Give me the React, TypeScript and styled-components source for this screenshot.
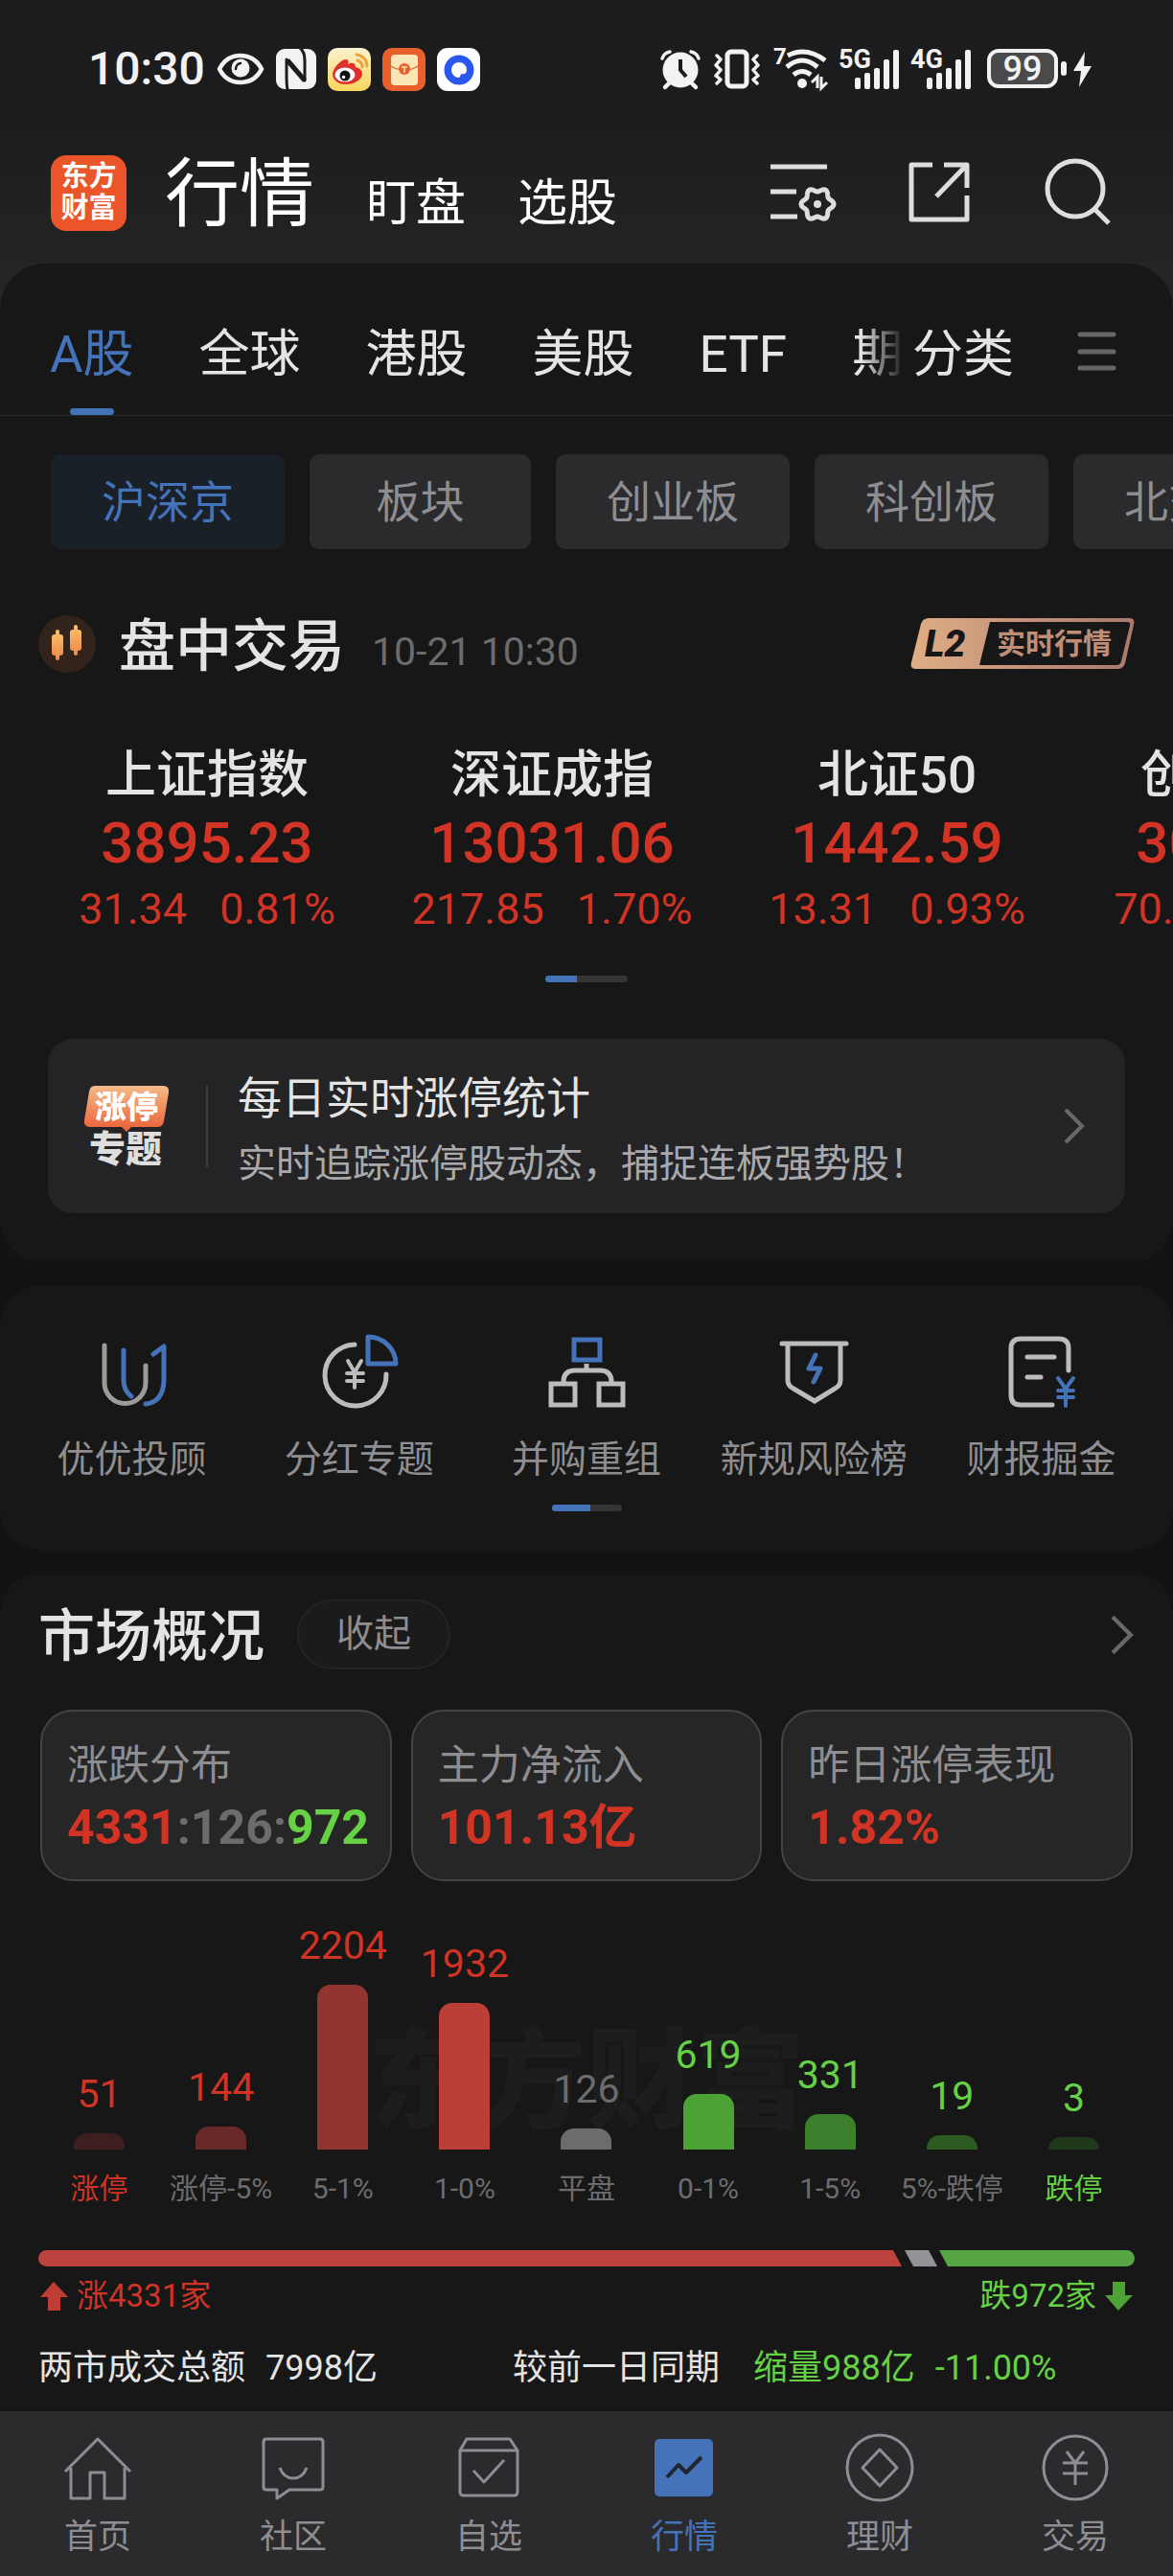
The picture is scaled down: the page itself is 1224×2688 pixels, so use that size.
import React from "react";
import styled, { createGlobalStyle } from "styled-components";

const color = {
  page: "#121212",
  panel: "#171717",
  bar: "#2b2b2d",
  text: "#e4e4e4",
  muted: "#8e8e92",
  dim: "#6c6c6e",
  blue: "#4473b9",
  red: "#d13325",
  green: "#66d145",
};

const GlobalStyle = createGlobalStyle`
  *, *::before, *::after { box-sizing: border-box; }
  body {
    margin: 0;
    background: ${color.page};
    color: ${color.text};
    font-family: Roboto, "Noto Sans CJK SC", sans-serif;
    overflow-x: hidden;
  }
  h1, h2, p, figure, ul, dl, dd, dt { margin: 0; padding: 0; }
  button {
    margin: 0;
    padding: 0;
    border: 0;
    background: none;
    color: inherit;
    font: inherit;
    white-space: nowrap;
    cursor: pointer;
  }
  a { color: inherit; text-decoration: none; }
  svg { display: block; flex: none; overflow: visible; }
`;

const Screen = styled.div`
  min-height: 100vh;
  display: flex;
  flex-direction: column;
`;

const Top = styled.div`
  background: linear-gradient(#1c1c1e 35%, #262626);
  margin-bottom: -48px;
  padding-bottom: 65px;
`;

const StatusBar = styled.div`
  height: 144px;
  padding: 0 84px 0 92px;
  display: flex;
  align-items: center;
  justify-content: space-between;
`;

const StatusGroup = styled.div<{ $gap: number }>`
  display: flex;
  align-items: center;
  gap: ${(p) => p.$gap}px;
`;

const Clock = styled.time`
  font-size: 48px;
  font-weight: 500;
  line-height: 48px;
  color: #f2f2f2;
`;

const Header = styled.header`
  height: 114px;
  padding: 0 64px 0 53px;
  display: flex;
  align-items: center;
`;

const Logo = styled.div`
  width: 79px;
  height: 79px;
  margin-right: 40px;
  border-radius: 16px;
  background: #ea5529;
  color: #fff;
  font-size: 29px;
  font-weight: 700;
  line-height: 33px;
  display: grid;
  place-content: center;
`;

const Sections = styled.nav`
  flex: 1;
  padding-top: 6px;
  display: flex;
  align-items: baseline;
  gap: 54px;
  color: #fff;
`;

const SectionTab = styled.button<{ $active?: boolean }>`
  font-size: ${(p) => (p.$active ? 78 : 52)}px;
  line-height: ${(p) => (p.$active ? 100 : 60)}px;
`;

const Actions = styled.div`
  display: flex;
  gap: 73px;
`;

const Panel = styled.section<{ $top?: boolean }>`
  background: ${color.panel};
  border-radius: ${(p) => (p.$top ? "48px 48px 40px 40px" : "40px")};
`;

const Tabs = styled.div`
  height: 159px;
  padding: 0 58px 0 52px;
  border-bottom: 1px solid #2a2a2b;
  display: flex;
  align-items: stretch;
`;

const TabStrip = styled.nav`
  flex: 1;
  min-width: 0;
  overflow: hidden;
  display: flex;
  gap: 68px;
  mask-image: linear-gradient(to right, #000 calc(100% - 54px), transparent calc(100% - 8px));
`;

const Tab = styled.button<{ $active?: boolean }>`
  display: flex;
  flex: none;
  flex-direction: column;
  align-items: center;
  padding-top: 57px;
  font-size: 53px;
  line-height: 76px;
  color: ${(p) => (p.$active ? color.blue : color.text)};
  &::after {
    content: "";
    width: 46px;
    height: 7px;
    margin-top: 18px;
    border-radius: 4px;
    background: ${(p) => (p.$active ? color.blue : "transparent")};
  }
`;

const MenuButton = styled.button`
  margin-left: 66px;
  padding-top: 26px;
  display: flex;
  align-items: center;
  justify-content: center;
`;

const Chips = styled.div`
  padding: 40px 0 0 53px;
  display: flex;
  gap: 26px;
  overflow: hidden;
`;

const Chip = styled.button<{ $active?: boolean }>`
  flex: none;
  min-width: 231px;
  height: 99px;
  padding: 0 53px;
  border-radius: 10px;
  font-size: 46px;
  line-height: 60px;
  color: ${(p) => (p.$active ? color.blue : color.muted)};
  background: ${(p) => (p.$active ? "#1a2028" : color.bar)};
`;

const SessionHead = styled.div`
  height: 60px;
  margin-top: 69px;
  padding: 0 40px;
  display: flex;
  align-items: center;
`;

const Title = styled.h2`
  padding-top: 5px;
  font-size: 59px;
  font-weight: 500;
  line-height: 60px;
  white-space: nowrap;
`;

const SessionTitle = styled(Title)`
  margin: 0 28px 0 24px;
`;

const SessionTime = styled.time`
  flex: 1;
  padding-top: 16px;
  font-size: 41px;
  line-height: 48px;
  color: ${color.dim};
`;

const Indices = styled.div`
  margin-top: 79px;
  padding-left: 36px;
  display: flex;
  overflow: hidden;
`;

const IndexCell = styled.a`
  flex: none;
  width: 360px;
  display: flex;
  flex-direction: column;
  align-items: center;
  color: ${color.red};
`;

const IndexName = styled.span`
  font-size: 53px;
  font-weight: 500;
  line-height: 56px;
  color: ${color.text};
`;

const IndexValue = styled.span`
  margin-top: 10px;
  font-size: 60px;
  font-weight: 500;
  line-height: 66px;
`;

const IndexChange = styled.span`
  margin-top: 12px;
  display: flex;
  gap: 34px;
  font-size: 45px;
  line-height: 48px;
`;

const Pager = styled.div<{ $width: number; $thumb: number }>`
  width: ${(p) => p.$width}px;
  height: 7px;
  margin: 0 auto;
  border-radius: 4px;
  overflow: hidden;
  background: #343435;
  &::before {
    content: "";
    display: block;
    width: ${(p) => p.$thumb}px;
    height: 7px;
    background: ${color.blue};
  }
`;

const IndexPager = styled(Pager)`
  margin-top: 45px;
`;

const PromoWrap = styled.div`
  padding: 59px 50px 50px;
`;

const Promo = styled.a`
  height: 182px;
  padding: 0 42px 0 38px;
  border-radius: 26px;
  background: #242426;
  display: flex;
  align-items: center;
`;

const PromoRule = styled.span`
  width: 2px;
  height: 86px;
  margin: 0 31px 0 37px;
  background: #3a3a3c;
`;

const PromoText = styled.div`
  flex: 1;
  padding-top: 11px;
  display: grid;
  gap: 15px;
`;

const PromoTitle = styled.p`
  font-size: 46px;
  line-height: 54px;
`;

const PromoNote = styled.p`
  font-size: 40px;
  line-height: 54px;
  color: #a9a9ab;
`;

const Features = styled.div`
  padding: 48px 19px 0;
  display: grid;
  grid-template-columns: repeat(5, 1fr);
`;

const Feature = styled.a`
  display: flex;
  flex-direction: column;
  align-items: center;
  gap: 26px;
  font-size: 39px;
  line-height: 46px;
  color: ${color.muted};
  white-space: nowrap;
`;

const FeaturePager = styled(Pager)`
  margin-top: 24px;
`;

const FeaturePanel = styled(Panel)`
  margin-top: 26px;
  padding-bottom: 40px;
`;

const MarketPanel = styled(Panel)`
  flex: 1;
  margin-top: 26px;
  padding: 26px 40px 20px;
  border-radius: 40px 40px 0 0;
`;

const MarketHead = styled.div`
  display: flex;
  align-items: center;
`;

const Collapse = styled.button`
  width: 160px;
  height: 73px;
  margin: 0 auto 0 34px;
  padding-bottom: 2px;
  border: 2px solid #242425;
  border-radius: 37px;
  background: #1b1b1c;
  font-size: 39px;
  line-height: 46px;
  color: ${color.muted};
`;

const Stats = styled.div`
  margin: 42px 2px 0;
  display: grid;
  grid-template-columns: repeat(3, minmax(0, 1fr));
  gap: 20px;
`;

const Stat = styled.button`
  height: 179px;
  padding: 4px 26px 0;
  border: 2px solid #444445;
  border-radius: 34px;
  background: #262626;
  display: flex;
  flex-direction: column;
  justify-content: center;
  align-items: flex-start;
  gap: 9px;
`;

const StatLabel = styled.span`
  font-size: 43px;
  line-height: 54px;
  color: ${color.muted};
`;

const StatValue = styled.span`
  font-size: 50px;
  font-weight: 700;
  line-height: 58px;
  color: ${color.red};
`;

const Tone = styled.span<{ $color: string }>`
  color: ${(p) => p.$color};
`;

const Chart = styled.figure`
  position: relative;
  height: 339px;
  display: grid;
  grid-template-columns: repeat(9, 1fr);
`;

const Watermark = styled.span`
  position: absolute;
  inset: 144px 0 auto;
  text-align: center;
  font-size: 114px;
  font-weight: 900;
  line-height: 130px;
  color: #1d1d1d;
`;

const Column = styled.div`
  position: relative;
  display: flex;
  flex-direction: column;
  align-items: center;
  justify-content: flex-end;
`;

const ColumnValue = styled.span<{ $color: string }>`
  font-size: 41px;
  line-height: 48px;
  color: ${(p) => p.$color};
`;

const Bar = styled.span<{ $color: string }>`
  width: 53px;
  margin-top: 17px;
  border-radius: 14px 14px 0 0;
  background: ${(p) => p.$color};
`;

const ColumnLabel = styled.span<{ $color: string }>`
  margin-top: 23px;
  font-size: 30px;
  line-height: 36px;
  white-space: nowrap;
  color: ${(p) => p.$color};
`;

const Ratio = styled.div`
  height: 17px;
  margin-top: 46px;
  border-radius: 9px;
  overflow: hidden;
  display: flex;
`;

const RatioPart = styled.span<{ $color: string; $shape: string }>`
  margin-right: -6px;
  background: ${(p) => p.$color};
  clip-path: ${(p) => p.$shape};
  &:last-child { margin-right: 0; }
`;

const Legend = styled.div`
  margin-top: 11px;
  padding: 0 2px;
  display: flex;
  justify-content: space-between;
  font-size: 33px;
  line-height: 40px;
`;

const LegendItem = styled.span<{ $color: string }>`
  display: flex;
  align-items: center;
  gap: 9px;
  color: ${(p) => p.$color};
`;

const Turnover = styled.div`
  margin-top: 30px;
  display: grid;
  grid-template-columns: 495px 1fr;
  font-size: 36px;
  line-height: 50px;
  white-space: nowrap;
`;

const TurnoverCell = styled.div`
  display: flex;
  gap: 21px;
`;

const TurnoverLabel = styled.span`
  &:not(:nth-last-child(2)) { margin-right: 14px; }
`;

const BottomNav = styled.nav`
  height: 173px;
  padding-top: 23px;
  background: ${color.bar};
  display: grid;
  grid-template-columns: repeat(6, 1fr);
`;

const NavItem = styled.a<{ $active?: boolean }>`
  display: flex;
  flex-direction: column;
  align-items: center;
  gap: 16px;
  font-size: 35px;
  line-height: 42px;
  color: ${(p) => (p.$active ? color.blue : color.muted)};
`;

/* ---------- status bar icons ---------- */

const EyeIcon = () => (
  <svg width="50" height="34" viewBox="0 0 50 34" fill="none">
    <path d="M3 17C8 7 16 3 25 3s17 4 22 14c-5 10-13 14-22 14S8 27 3 17Z" stroke="#f2f2f2" strokeWidth="4.5" strokeLinejoin="round" />
    <circle cx="25" cy="16" r="9.5" fill="#f2f2f2" />
    <path d="M20 17a6 6 0 0 1 5-6" stroke="#1c1c1e" strokeWidth="2.5" strokeLinecap="round" />
  </svg>
);

const NfcIcon = () => (
  <svg width="42" height="42" viewBox="0 0 42 42">
    <rect width="42" height="42" rx="9" fill="#f2f2f2" />
    <path d="M12 43Q11 38 11 30V11L30 33V12Q30 3 25-1" fill="none" stroke="#1c1c1e" strokeWidth="3" strokeLinejoin="round" />
    <path d="M12 12L30 33" fill="none" stroke="#1c1c1e" strokeWidth="5" />
  </svg>
);

const WeiboIcon = () => (
  <svg width="45" height="45" viewBox="0 0 45 45">
    <defs>
      <linearGradient id="weibo" x2="0" y2="1">
        <stop stopColor="#fbf3cf" />
        <stop offset="1" stopColor="#f8d55c" />
      </linearGradient>
    </defs>
    <rect width="45" height="45" rx="10" fill="url(#weibo)" />
    <path d="M5 27C6 20 14 12 19 12c3 0 3 3 2 5 4-2 8-2 8 3 4 1 7 3 7 7 0 6-8 11-17 11S5 33 5 27Z" fill="#e0302c" />
    <ellipse cx="18" cy="28" rx="10.5" ry="7.5" fill="#fff" />
    <circle cx="18" cy="29" r="5.5" fill="#111" />
    <circle cx="16.5" cy="30.5" r="1.8" fill="#fff" />
    <path d="M31 13a7 7 0 0 1 5 7M30 7a12 12 0 0 1 11 12" fill="none" stroke="#efa33c" strokeWidth="3" strokeLinecap="round" />
  </svg>
);

const MailIcon = () => (
  <svg width="45" height="45" viewBox="0 0 45 45">
    <rect width="45" height="45" rx="10" fill="#e8602c" />
    <rect x="9" y="7" width="28" height="32" rx="4" fill="#fbe6b8" />
    <path d="M9 19Q15 23 23 23T37 19" fill="none" stroke="#e8602c" strokeWidth="1.5" />
    <circle cx="23" cy="22" r="6" fill="#e8602c" />
    <path d="M20 20H26M23 20V26" stroke="#fbe6b8" strokeWidth="1.5" />
  </svg>
);

const QuarkIcon = () => (
  <svg width="45" height="45" viewBox="0 0 45 45">
    <rect width="45" height="45" rx="11" fill="#fff" />
    <circle cx="23" cy="23" r="15.5" fill="#2a57ee" />
    <path d="M23 15a8 8 0 1 0 0 16c2-1 1-4 3-4 3 1 5-1 5-4a8 8 0 0 0-8-8Z" fill="#fff" />
  </svg>
);

const AlarmIcon = () => (
  <svg width="42" height="42" viewBox="0 0 42 42" fill="none" stroke="#f2f2f2" strokeLinecap="round">
    <circle cx="21" cy="22" r="18.5" fill="#f2f2f2" stroke="none" />
    <path d="M9 36L5 40M33 36L37 40" strokeWidth="4.5" />
    <path d="M2 10Q4 4 10 3M40 10Q38 4 32 3" strokeWidth="3.5" />
    <path d="M21 11V22L27 29" stroke="#1c1c1e" strokeWidth="4" strokeLinecap="butt" />
  </svg>
);

const VibrateIcon = () => (
  <svg width="50" height="42" viewBox="0 0 50 42" fill="none" stroke="#f2f2f2" strokeLinejoin="round" strokeLinecap="round">
    <rect x="15" y="3" width="20" height="36" rx="4" strokeWidth="5" />
    <path d="M4 7L8 11L3 17L8 22L3 28L8 32L4 36M46 7L42 11L47 17L42 22L47 28L42 32L46 36" strokeWidth="3.5" />
  </svg>
);

const WifiIcon = () => (
  <svg width="57" height="46" viewBox="0 0 57 46" fill="none" stroke="#f2f2f2">
    <text x="0" y="18" fontSize="24" fontWeight="700" fill="#f2f2f2" stroke="none">7</text>
    <path d="M15 9Q34-1 54 14M14 21Q30 7 46 21M21 29Q30 22 39 29" strokeWidth="5" />
    <circle cx="30" cy="38" r="5" fill="#f2f2f2" stroke="none" />
    <path d="M40 37L46 31V43M50 31V43L56 37" strokeWidth="3" />
  </svg>
);

const SignalIcon = ({ label }: { label: string }) => (
  <svg width="62" height="44" viewBox="0 0 62 44" fill="#f2f2f2">
    <text x="-2" y="21" fontSize="27" fontWeight="700">{label}</text>
    {[12, 17, 22, 31, 41].map((h, i) => (
      <rect key={h} x={15 + i * 10} y={43 - h} width="6" height={h} rx="2" />
    ))}
  </svg>
);

const BatteryIcon = () => (
  <svg width="113" height="42" viewBox="-3 0 113 42">
    <rect x="2" y="2" width="70" height="37" rx="10" fill="#4a4a4c" stroke="#f2f2f2" strokeWidth="4" />
    <text x="37" y="33" fontSize="36" fontWeight="500" textAnchor="middle" fill="#f2f2f2">99</text>
    <rect x="77" y="13" width="6" height="15" rx="3" fill="#f2f2f2" />
    <path d="M102 3L90 23H98L96 40L109 18H101Z" fill="#f2f2f2" />
  </svg>
);

/* ---------- header icons ---------- */

const gearPath = (cx: number, cy: number) =>
  Array.from({ length: 72 }, (_, i) => {
    const a = (i * Math.PI) / 36;
    const r = 15 + 2 * Math.cos(6 * a);
    return `${i ? "L" : "M"}${(cx + r * Math.cos(a)).toFixed(2)} ${(cy + r * Math.sin(a)).toFixed(2)}`;
  }).join("") + "Z";

const ListGearIcon = () => (
  <svg width="70" height="70" viewBox="0 0 70 70" fill="none" stroke="#dedede" strokeWidth="5">
    <path d="M0 8H59M0 34H27M0 60H28" />
    <path d={gearPath(49, 47)} />
    <circle cx="49" cy="47" r="4" fill="#dedede" stroke="none" />
  </svg>
);

const ShareIcon = () => (
  <svg width="70" height="70" viewBox="0 0 70 70" fill="none" stroke="#dedede" strokeWidth="5" strokeLinejoin="round">
    <path d="M26 6H4V63H62V38M38 6H62V30M60 8L30 39" />
  </svg>
);

const SearchIcon = () => (
  <svg width="70" height="70" viewBox="0 0 70 70" fill="none" stroke="#dedede" strokeWidth="5">
    <circle cx="32" cy="31" r="29" />
    <path d="M52 52L67 67" />
  </svg>
);

const MenuIcon = () => (
  <svg width="42" height="42" viewBox="0 0 42 42" stroke="#666668" strokeWidth="5" strokeLinecap="round">
    <path d="M3 3H38M3 21H38M3 38H38" />
  </svg>
);

const Chevron = ({ big }: { big?: boolean }) => (
  <svg width={big ? 26 : 22} height={big ? 42 : 38} viewBox="0 0 22 38" fill="none" stroke="#68686a" strokeWidth="4">
    <path d="M2 2L19 19L2 36" />
  </svg>
);

/* ---------- content drawings ---------- */

const CandleIcon = () => (
  <svg width="60" height="60" viewBox="0 0 60 60">
    <defs>
      <linearGradient id="candle" x2="0" y2="1">
        <stop stopColor="#f7bf68" />
        <stop offset="1" stopColor="#f08a4c" />
      </linearGradient>
    </defs>
    <circle cx="30" cy="30" r="30" fill="#33241b" />
    <g fill="url(#candle)">
      <rect x="14" y="20" width="12" height="22" rx="3" />
      <rect x="18" y="15" width="4" height="32" rx="2" />
      <rect x="33" y="15" width="12" height="22" rx="3" />
      <rect x="37" y="10" width="4" height="32" rx="2" />
    </g>
  </svg>
);

const L2Badge = () => (
  <svg width="234" height="54" viewBox="0 0 234 54">
    <defs>
      <linearGradient id="gold">
        <stop stopColor="#dfae85" />
        <stop offset="0.5" stopColor="#c4917a" />
        <stop offset="1" stopColor="#a87a6c" />
      </linearGradient>
    </defs>
    <path d="M19 0H228Q235 0 233 7L224 47Q222 53 216 53H6Q-1 53 1 46L11 6Q13 0 19 0Z" fill="url(#gold)" />
    <path d="M83 4H226Q230 4 229 8L220 45Q219 49 215 49H72Z" fill={color.panel} />
    <text x="15" y="40" fontSize="39" fontWeight="900" fontStyle="italic" fill="#171717">L2</text>
    <text x="90" y="37" fontSize="30" fontWeight="700" fill="#c08d77">实时行情</text>
  </svg>
);

const LimitUpIcon = () => (
  <svg width="90" height="84" viewBox="0 0 90 84">
    <defs>
      <linearGradient id="flame" x2="0" y2="1">
        <stop stopColor="#f4bb89" />
        <stop offset="1" stopColor="#ea5f36" />
      </linearGradient>
    </defs>
    <path d="M11 0H82Q89 0 88 7L83 37Q82 43 76 43H49L44 48L39 43H6Q-1 43 0 36L5 6Q6 0 11 0Z" fill="url(#flame)" />
    <text x="11" y="34" fontSize="33" fontWeight="900" fill="#fff">涨停</text>
    <text x="5" y="79" fontSize="38" fontWeight="900" fill="#dedede">专题</text>
  </svg>
);

const grey = "#bcbcbc";

const FeatureSvg = ({ children }: { children: React.ReactNode }) => (
  <svg width="84" height="84" viewBox="0 0 84 84" fill="none" stroke={grey} strokeWidth="5" strokeLinecap="round">
    {children}
  </svg>
);

const features = [
  {
    label: "优优投顾",
    icon: (
      <>
        <path d="M13 14V53a21.5 21.5 0 0 0 43 0V35" stroke="#9b9b9b" />
        <path d="M33 19V50Q33 61 41 67M64 23L75 15V51Q74 73 56 75" stroke={color.blue} strokeLinejoin="round" />
      </>
    ),
  },
  {
    label: "分红专题",
    icon: (
      <>
        <path d="M37 13A32 32 0 1 0 70 44" />
        <path d="M51 5V33H80A29 28 0 0 0 51 5Z" stroke={color.blue} strokeLinejoin="round" />
        <path d="M30 30L37 42L44 30M29 43H46M29 51H46M37 43V58" strokeWidth="4" />
      </>
    ),
  },
  {
    label: "并购重组",
    icon: (
      <>
        <rect x="29" y="8" width="27" height="21" stroke={color.blue} />
        <path d="M42 33V39M18 52Q18 40 30 40H56Q68 40 68 52" strokeLinecap="butt" />
        <rect x="5" y="54" width="25" height="22" />
        <rect x="55" y="54" width="25" height="22" />
      </>
    ),
  },
  {
    label: "新规风险榜",
    icon: (
      <>
        <path d="M9 12H76M15 12V50Q15 56 21 59L43 72L64 59Q70 56 70 50V12" />
        <path d="M44 24L37 38H49L42 52" stroke={color.blue} strokeLinejoin="round" />
      </>
    ),
  },
  {
    label: "财报掘金",
    icon: (
      <>
        <path d="M54 76H21Q11 76 11 66V17Q11 7 21 7H61Q71 7 71 17V40M28 26H56M28 47H42" />
        <path d="M60 48L68 59L76 48M60 61H76M60 68H76M68 59V77" stroke={color.blue} strokeWidth="4" />
      </>
    ),
  },
];

const navItems = [
  { label: "首页", icon: <path d="M2 40L36 6L70 40M8 36V68H28V41H43V68H64V36" /> },
  { label: "社区", icon: <path d="M8 6H64Q67 6 67 9V56Q67 59 64 59H32L19 68V59H8Q5 59 5 56V9Q5 6 8 6ZM22 36Q26 47 36 47T50 36" /> },
  { label: "自选", icon: <path d="M13 6H58L66 18V61Q66 65 62 65H10Q6 65 6 61V18ZM6 18H66M20 39L31 51L52 28" /> },
  {
    label: "行情",
    active: true,
    icon: (
      <>
        <rect x="5" y="6" width="61" height="60" rx="5" fill={color.blue} stroke="none" />
        <path d="M18 46L30 33L38 41L54 25" stroke="#20262f" strokeWidth="4" />
      </>
    ),
  },
  { label: "理财", icon: <path d="M70 36A34 34 0 1 1 2 36A34 34 0 1 1 70 36ZM36 17L54 36L36 55L18 36Z" /> },
  { label: "交易", icon: <path d="M69 36A33 33 0 1 1 3 36A33 33 0 1 1 69 36ZM27 19L36 31L45 19M23 31H49M23 42H49M36 31V54" /> },
];

/* ---------- data ---------- */

const indices = [
  { name: "上证指数", value: "3895.23", diff: "31.34", pct: "0.81%" },
  { name: "深证成指", value: "13031.06", diff: "217.85", pct: "1.70%" },
  { name: "北证50", value: "1442.59", diff: "13.31", pct: "0.93%" },
  { name: "创业板指", value: "3063.75", diff: "70.30", pct: "2.35%" },
];

const columns = [
  { label: "涨停", value: 51, height: 17, fill: "#3c1f1e", tone: color.red, strong: true },
  { label: "涨停-5%", value: 144, height: 24, fill: "#672a28", tone: color.red },
  { label: "5-1%", value: 2204, height: 172, fill: "#92342f", tone: color.red },
  { label: "1-0%", value: 1932, height: 153, fill: "#bb3e37", tone: color.red },
  { label: "平盘", value: 126, height: 22, fill: "#6c6c6d", tone: color.dim },
  { label: "0-1%", value: 619, height: 58, fill: "#4ca235", tone: color.green },
  { label: "1-5%", value: 331, height: 37, fill: "#3c7f2c", tone: color.green },
  { label: "5%-跌停", value: 19, height: 15, fill: "#2d5c23", tone: color.green },
  { label: "跌停", value: 3, height: 13, fill: "#20391b", tone: color.green, strong: true },
];

export default function App() {
  return (
    <Screen>
      <GlobalStyle />
      <Top>
        <StatusBar>
          <StatusGroup $gap={12}>
            <Clock>10:30</Clock>
            <EyeIcon />
            <NfcIcon />
            <WeiboIcon />
            <MailIcon />
            <QuarkIcon />
          </StatusGroup>
          <StatusGroup $gap={13}>
            <AlarmIcon />
            <VibrateIcon />
            <WifiIcon />
            <SignalIcon label="5G" />
            <SignalIcon label="4G" />
            <BatteryIcon />
          </StatusGroup>
        </StatusBar>
        <Header>
          <Logo>
            <span>东方</span>
            <span>财富</span>
          </Logo>
          <Sections>
            <SectionTab $active>行情</SectionTab>
            <SectionTab>盯盘</SectionTab>
            <SectionTab>选股</SectionTab>
          </Sections>
          <Actions>
            <button aria-label="列表设置"><ListGearIcon /></button>
            <button aria-label="分享"><ShareIcon /></button>
            <button aria-label="搜索"><SearchIcon /></button>
          </Actions>
        </Header>
      </Top>

      <Panel $top>
        <Tabs>
          <TabStrip>
            {["A股", "全球", "港股", "美股", "ETF", "期货"].map((t, i) => (
              <Tab key={t} $active={i === 0}>{t}</Tab>
            ))}
          </TabStrip>
          <Tab>分类</Tab>
          <MenuButton aria-label="菜单"><MenuIcon /></MenuButton>
        </Tabs>
        <Chips>
          {["沪深京", "板块", "创业板", "科创板", "北交所"].map((t, i) => (
            <Chip key={t} $active={i === 0}>{t}</Chip>
          ))}
        </Chips>
        <SessionHead>
          <CandleIcon />
          <SessionTitle>盘中交易</SessionTitle>
          <SessionTime>10-21 10:30</SessionTime>
          <a href="#l2" aria-label="L2 实时行情"><L2Badge /></a>
        </SessionHead>
        <Indices>
          {indices.map((x) => (
            <IndexCell key={x.name} href="#index">
              <IndexName>{x.name}</IndexName>
              <IndexValue>{x.value}</IndexValue>
              <IndexChange>
                <span>{x.diff}</span>
                <span>{x.pct}</span>
              </IndexChange>
            </IndexCell>
          ))}
        </Indices>
        <IndexPager $width={86} $thumb={33} />
        <PromoWrap>
          <Promo href="#limit-up">
            <LimitUpIcon />
            <PromoRule />
            <PromoText>
              <PromoTitle>每日实时涨停统计</PromoTitle>
              <PromoNote>实时追踪涨停股动态，捕捉连板强势股！</PromoNote>
            </PromoText>
            <Chevron />
          </Promo>
        </PromoWrap>
      </Panel>

      <FeaturePanel>
        <Features>
          {features.map((f) => (
            <Feature key={f.label} href="#feature">
              <FeatureSvg>{f.icon}</FeatureSvg>
              {f.label}
            </Feature>
          ))}
        </Features>
        <FeaturePager $width={73} $thumb={40} />
      </FeaturePanel>

      <MarketPanel>
        <MarketHead>
          <Title>市场概况</Title>
          <Collapse>收起</Collapse>
          <a href="#market" aria-label="更多"><Chevron big /></a>
        </MarketHead>
        <Stats>
          <Stat>
            <StatLabel>涨跌分布</StatLabel>
            <StatValue>
              4331<Tone $color={color.dim}>:126:</Tone><Tone $color={color.green}>972</Tone>
            </StatValue>
          </Stat>
          <Stat>
            <StatLabel>主力净流入</StatLabel>
            <StatValue>101.13亿</StatValue>
          </Stat>
          <Stat>
            <StatLabel>昨日涨停表现</StatLabel>
            <StatValue>1.82%</StatValue>
          </Stat>
        </Stats>
        <Chart>
          <Watermark aria-hidden>东方财富</Watermark>
          {columns.map((c) => (
            <Column key={c.label}>
              <ColumnValue $color={c.tone}>{c.value}</ColumnValue>
              <Bar $color={c.fill} style={{ height: c.height }} />
              <ColumnLabel $color={c.strong ? c.tone : color.dim}>{c.label}</ColumnLabel>
            </Column>
          ))}
        </Chart>
        <Ratio>
          <RatioPart $color="#bb423d" $shape="polygon(0 0, calc(100% - 9px) 0, 100% 100%, 0 100%)" style={{ flex: 901 }} />
          <RatioPart $color="#929297" $shape="polygon(9px 0, calc(100% - 9px) 0, 100% 100%, 18px 100%)" style={{ width: 43 }} />
          <RatioPart $color="#56a644" $shape="polygon(8px 0, 100% 0, 100% 100%, 17px 100%)" style={{ flex: 212 }} />
        </Ratio>
        <Legend>
          <LegendItem $color={color.red}>
            <svg width="29" height="30" viewBox="0 0 29 30"><path d="M14 0L29 16H21V30H8V16H0Z" fill="#c03d35" /></svg>
            涨4331家
          </LegendItem>
          <LegendItem $color={color.green}>
            跌972家
            <svg width="29" height="30" viewBox="0 0 29 30"><path d="M14 30L29 14H21V0H8V14H0Z" fill="#4ca235" /></svg>
          </LegendItem>
        </Legend>
        <Turnover>
          <TurnoverCell>
            <TurnoverLabel>两市成交总额</TurnoverLabel>
            <span>7998亿</span>
          </TurnoverCell>
          <TurnoverCell>
            <TurnoverLabel>较前一日同期</TurnoverLabel>
            <Tone $color={color.green}>缩量988亿</Tone>
            <Tone $color={color.green}>-11.00%</Tone>
          </TurnoverCell>
        </Turnover>
      </MarketPanel>

      <BottomNav>
        {navItems.map((n) => (
          <NavItem key={n.label} href="#nav" $active={n.active}>
            <svg width="72" height="72" viewBox="0 0 72 72" fill="none" stroke={color.muted} strokeWidth="3" strokeLinejoin="round">
              {n.icon}
            </svg>
            {n.label}
          </NavItem>
        ))}
      </BottomNav>
    </Screen>
  );
}
